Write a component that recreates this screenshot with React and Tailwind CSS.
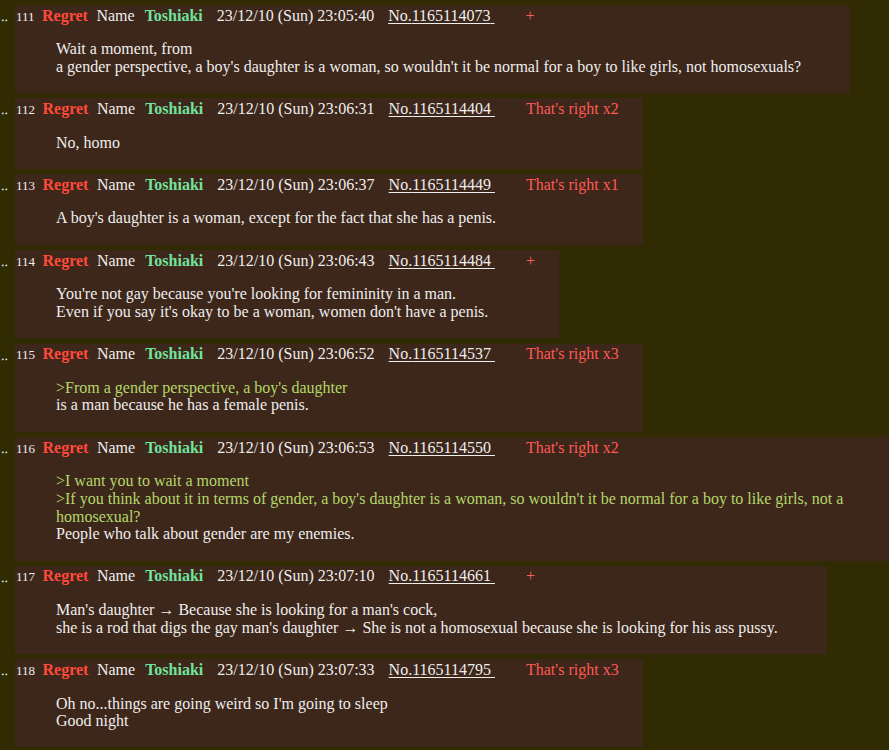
import React from "react";

const posts = [
  { n: 111, t: "23:05:40", no: "1165114073", s: "+", lines: [["", "Wait a moment, from"], ["", "a gender perspective, a boy's daughter is a woman, so wouldn't it be normal for a boy to like girls, not homosexuals?"]] },
  { n: 112, t: "23:06:31", no: "1165114404", s: "That's right x2", lines: [["", "No, homo"]] },
  { n: 113, t: "23:06:37", no: "1165114449", s: "That's right x1", lines: [["", "A boy's daughter is a woman, except for the fact that she has a penis."]] },
  { n: 114, t: "23:06:43", no: "1165114484", s: "+", lines: [["", "You're not gay because you're looking for femininity in a man."], ["", "Even if you say it's okay to be a woman, women don't have a penis."]] },
  { n: 115, t: "23:06:52", no: "1165114537", s: "That's right x3", lines: [["q", ">From a gender perspective, a boy's daughter"], ["", "is a man because he has a female penis."]] },
  { n: 116, t: "23:06:53", no: "1165114550", s: "That's right x2", lines: [["q", ">I want you to wait a moment"], ["q", ">If you think about it in terms of gender, a boy's daughter is a woman, so wouldn't it be normal for a boy to like girls, not a homosexual?"], ["", "People who talk about gender are my enemies."]] },
  { n: 117, t: "23:07:10", no: "1165114661", s: "+", lines: [["", "Man's daughter \u2192 Because she is looking for a man's cock,"], ["", "she is a rod that digs the gay man's daughter \u2192 She is not a homosexual because she is looking for his ass pussy."]] },
  { n: 118, t: "23:07:33", no: "1165114795", s: "That's right x3", lines: [["", "Oh no...things are going weird so I'm going to sleep"], ["", "Good night"]] },
];

function Post({ p }) {
  return (
    <div className="flex items-start">
      <div className="w-[15px] shrink-0 pt-[3px] pl-[1px] text-[13px] leading-[18px] text-[#eeeeee]">‥</div>
      <div className="bg-[#3d261a] pt-[1.5px] pb-[1.5px] pl-[1px] pr-[1px] min-w-0">
        <div className="flex h-[17.7px] items-baseline whitespace-nowrap pr-[23px] leading-[17.7px] text-[16px]">
          <span className="text-[13px] leading-none text-[#eeeeee]">{p.n}</span>
          <span className="ml-[7.5px] font-bold text-[#ff4a3a]">Regret</span>
          <span className="ml-[8.5px] text-[#eeeeee]">Name</span>
          <span className="ml-[10px] font-bold text-[#72e39c]">Toshiaki</span>
          <span className="ml-[14px] text-[#eeeeee]">23/12/10 (Sun) {p.t}</span>
          <span className="ml-[14px] text-[#eeeeee] underline underline-offset-[2px]">No.{p.no}{"\u00a0"}</span>
          <span className="ml-[31px] text-[#ff5a55]">{p.s}</span>
        </div>
        <div className="ml-[40px] mr-[48px] my-[16px] text-[16px] leading-[17.7px] text-[#eeeeee]">
          {p.lines.map((l, i) => (
            <div key={i} className={l[0] === "q" ? "text-[#b4d86a]" : ""}>{l[1]}</div>
          ))}
        </div>
      </div>
    </div>
  );
}

export default function App() {
  return (
    <div className="min-h-[750px] w-full overflow-hidden bg-[#302b03] pt-[5px] font-['Liberation_Serif','Times_New_Roman',serif]">
      <div className="flex w-[897px] flex-col gap-[5.4px]">
        {posts.map((p) => (
          <Post key={p.n} p={p} />
        ))}
      </div>
    </div>
  );
}
